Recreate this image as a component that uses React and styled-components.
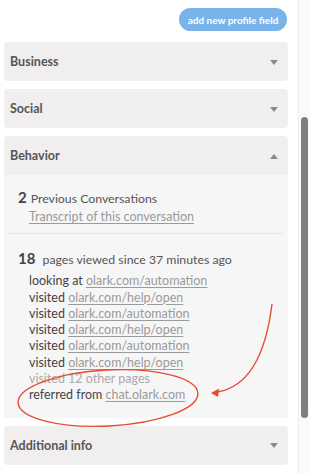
import React from "react";
import styled, { createGlobalStyle } from "styled-components";

const Global = createGlobalStyle`
  html, body { margin: 0; padding: 0; background: #fff; }
  body { font-family: Lato, "Open Sans", sans-serif; -webkit-font-smoothing: antialiased; }
  * { box-sizing: border-box; }
`;

const Page = styled.div`
  position: relative;
  display: flex;
  width: 310px;
  height: 473px;
  overflow: hidden;
`;

const Main = styled.div`
  flex: 0 0 298px;
  padding: 8px 10px 0 4px;
`;

const Toolbar = styled.div`
  display: flex;
  justify-content: flex-end;
  padding-right: 1px;
  margin-bottom: 11px;
`;

const AddButton = styled.button`
  height: 23px;
  width: 108px;
  border: none;
  border-radius: 12px;
  background: #78b3e9;
  color: #fff;
  font-family: Lato, sans-serif;
  font-weight: 700;
  font-size: 10px;
  padding: 0;
  white-space: nowrap;
`;

const Card = styled.div`
  background: #f0eeef;
  border-radius: 4px;
  margin-bottom: 8px;
  overflow: hidden;
`;

const Header = styled.div`
  height: 39px;
  display: flex;
  align-items: center;
  justify-content: space-between;
  padding: 0 10px 0 6px;
  font-weight: 700;
  font-size: 12.5px;
  color: #555;
`;

const Caret = styled.span`
  width: 0;
  height: 0;
  border-left: 4.5px solid transparent;
  border-right: 4.5px solid transparent;
  ${(p) =>
    p.$up
      ? "border-bottom: 5px solid #8a8a8a;"
      : "border-top: 5px solid #8a8a8a;"}
  margin-top: 1px;
`;

const Body = styled.div`
  background: #f6f6f6;
  padding: 0 5px;
`;

const Section = styled.div`
  padding: ${(p) => p.$pad};
  border-bottom: ${(p) => (p.$divider ? "1px solid #e4e4e4" : "none")};
`;

const Headline = styled.div`
  height: 18px;
  line-height: 18px;
  font-size: 12.3px;
  color: #555;
  white-space: nowrap;
`;

const Count = styled.b`
  font-size: 15px;
  line-height: 18px;
  color: #444;
  margin-right: 4px;
`;

const List = styled.div`
  margin-top: ${(p) => p.$mt}px;
  padding-left: 11px;
`;

const Line = styled.div`
  line-height: 16.3px;
  font-size: 12.5px;
  color: ${(p) => (p.$muted ? "#aaa" : "#444")};
  white-space: nowrap;
`;

const Link = styled.span`
  color: #9b9b9b;
  text-decoration: underline;
  text-underline-offset: 2px;
  text-decoration-thickness: 1px;
`;

const Track = styled.div`
  flex: 1;
  background: #fafafa;
  border-left: 1px solid #ececec;
  padding: 117px 0 0 2px;
`;

const Thumb = styled.div`
  width: 7px;
  height: 301px;
  border-radius: 4px;
  background: #7f7f7f;
`;

const Overlay = styled.svg`
  position: absolute;
  left: 0;
  top: 0;
  pointer-events: none;
`;

const pages = [
  ["visited", "olark.com/help/open"],
  ["visited", "olark.com/automation"],
  ["visited", "olark.com/help/open"],
  ["visited", "olark.com/automation"],
  ["visited", "olark.com/help/open"],
];

function Panel({ title, open, children }) {
  return (
    <Card>
      <Header>
        <span>{title}</span>
        <Caret $up={open} />
      </Header>
      {children}
    </Card>
  );
}

export default function App() {
  return (
    <>
      <Global />
      <Page>
        <Main>
          <Toolbar>
            <AddButton>add new profile field</AddButton>
          </Toolbar>
          <Panel title="Business" />
          <Panel title="Social" />
          <Panel title="Behavior" open>
            <Body>
              <Section $divider $pad="13px 9px 8px">
                <Headline>
                  <Count>2</Count>Previous Conversations
                </Headline>
                <List $mt={3}>
                  <Line>
                    <Link>Transcript of this conversation</Link>
                  </Line>
                </List>
              </Section>
              <Section $pad="15px 9px 14px">
                <Headline>
                  <Count>18</Count> pages viewed since 37 minutes ago
                </Headline>
                <List $mt={6}>
                  <Line>
                    looking at <Link>olark.com/automation</Link>
                  </Line>
                  {pages.map(([verb, url], i) => (
                    <Line key={i}>
                      {verb} <Link>{url}</Link>
                    </Line>
                  ))}
                  <Line $muted>visited 12 other pages</Line>
                  <Line>
                    referred from <Link>chat.olark.com</Link>
                  </Line>
                </List>
              </Section>
            </Body>
          </Panel>
          <Panel title="Additional info" />
        </Main>
        <Track>
          <Thumb />
        </Track>
        <Overlay width="310" height="473" viewBox="0 0 310 473">
          <ellipse
            cx="108"
            cy="398"
            rx="90"
            ry="28"
            transform="rotate(-3 108 398)"
            fill="none"
            stroke="#e84a30"
            strokeWidth="1.4"
          />
          <path
            d="M272 304 Q262 385 217 392"
            fill="none"
            stroke="#e84a30"
            strokeWidth="1.4"
          />
          <polygon points="211,393 219,388.5 218,397" fill="#e84a30" />
        </Overlay>
      </Page>
    </>
  );
}
